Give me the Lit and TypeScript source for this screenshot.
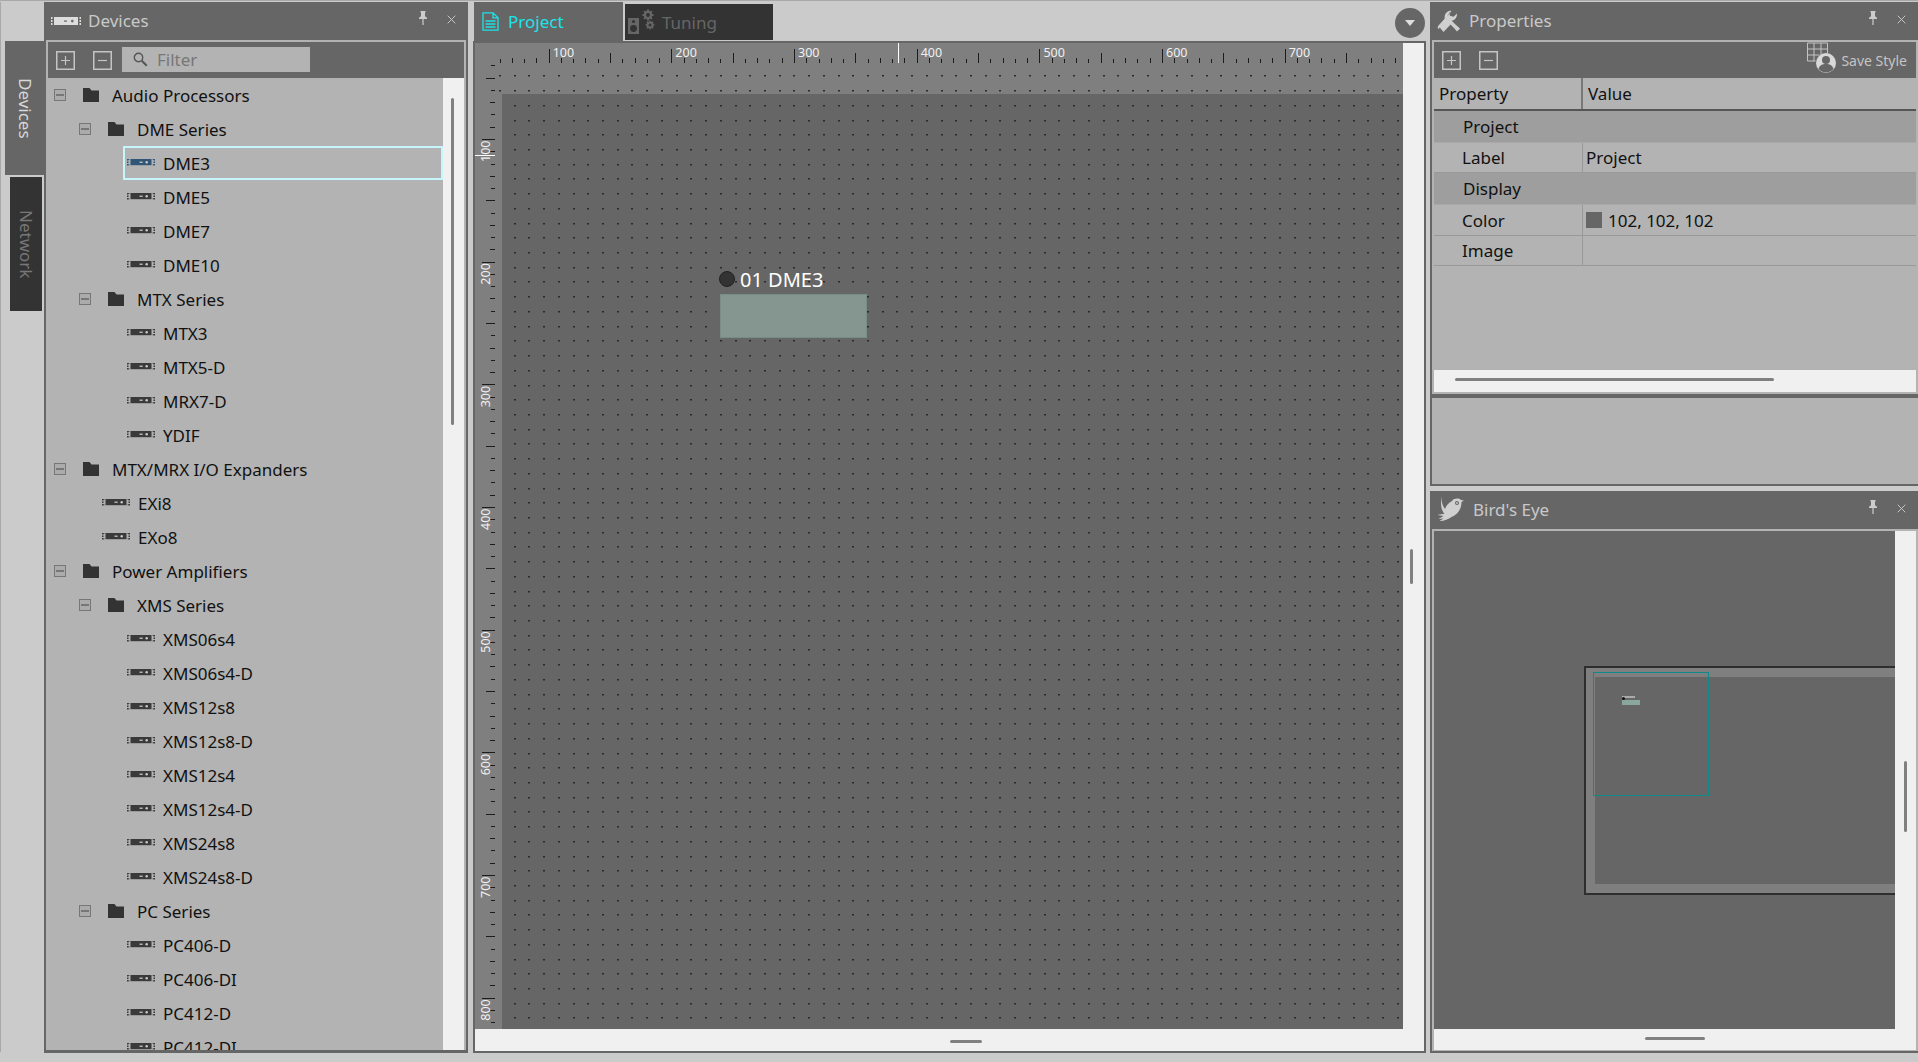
import { LitElement, html, css, svg } from "lit";
import { customElement } from "lit/decorators.js";

type Row = { t: string; k: "f0" | "f1" | "d1" | "d2"; sel?: boolean };
const ROWS: Row[] = [
  { t: "Audio Processors", k: "f0" }, { t: "DME Series", k: "f1" },
  { t: "DME3", k: "d2", sel: true }, { t: "DME5", k: "d2" }, { t: "DME7", k: "d2" }, { t: "DME10", k: "d2" },
  { t: "MTX Series", k: "f1" }, { t: "MTX3", k: "d2" }, { t: "MTX5-D", k: "d2" }, { t: "MRX7-D", k: "d2" }, { t: "YDIF", k: "d2" },
  { t: "MTX/MRX I/O Expanders", k: "f0" }, { t: "EXi8", k: "d1" }, { t: "EXo8", k: "d1" },
  { t: "Power Amplifiers", k: "f0" }, { t: "XMS Series", k: "f1" },
  { t: "XMS06s4", k: "d2" }, { t: "XMS06s4-D", k: "d2" }, { t: "XMS12s8", k: "d2" }, { t: "XMS12s8-D", k: "d2" },
  { t: "XMS12s4", k: "d2" }, { t: "XMS12s4-D", k: "d2" }, { t: "XMS24s8", k: "d2" }, { t: "XMS24s8-D", k: "d2" },
  { t: "PC Series", k: "f1" }, { t: "PC406-D", k: "d2" }, { t: "PC406-DI", k: "d2" }, { t: "PC412-D", k: "d2" }, { t: "PC412-DI", k: "d2" },
];

const deviceIcon = (body: string, mark: string, w = 28) => html`<svg class="dev" width=${w} height="10" viewBox="0 0 28 10">
  <path d="M0 2h1.5v1.5H0zM0 4.5h1.5V6H0zM0 7h1.5v1.5H0zM26.5 2H28v1.5h-1.5zM26.5 4.5H28V6h-1.5zM26.5 7H28v1.5h-1.5zM1.5 2h1v.8h-1zM1.5 7.5h1v.8h-1zM25.5 2h1v.8h-1zM25.5 7.5h1v.8h-1z" fill=${body}/>
  <rect x="3.5" y="2" width="21" height="6.2" fill=${body}/>
  <rect x="12.5" y="4.6" width="3.2" height="1.2" fill=${mark}/><rect x="18.5" y="4" width="2.4" height="2.4" rx="1.2" fill=${mark}/>
</svg>`;

const folder = html`<svg class="fold" width="16" height="14" viewBox="0 0 16 14"><path d="M0 0h6.5l2 2.5H16V14H0z" fill="#333"/></svg>`;
const minusBox = html`<span class="xbox"><i></i></span>`;
const pin = html`<svg class="pin" width="10" height="14" viewBox="0 0 10 14"><path d="M2.5 0h5v1.4H7v3.8l2 1.6V8H5.6v6h-1.2V8H1V6.8l2-1.6V1.4h-.5z" fill="#ccc"/></svg>`;
const closeX = html`<svg class="x" width="9" height="9" viewBox="0 0 9 9"><path d="M.7.7l7.6 7.6M8.3.7L.7 8.3" stroke="#c6c6c6" stroke-width="1"/></svg>`;
const plusBtn = html`<svg class="tb" width="19" height="19" viewBox="0 0 19 19"><rect x=".75" y=".75" width="17.5" height="17.5" fill="none" stroke="#c4c4c4" stroke-width="1.5"/><path d="M5 9.5h9M9.5 5v9" stroke="#c4c4c4" stroke-width="1.2"/></svg>`;
const minusBtn = html`<svg class="tb" width="19" height="19" viewBox="0 0 19 19"><rect x=".75" y=".75" width="17.5" height="17.5" fill="none" stroke="#c4c4c4" stroke-width="1.5"/><path d="M5 9.5h9" stroke="#c4c4c4" stroke-width="1.2"/></svg>`;

function gear(cx: number, cy: number, r: number, color: string, hole: string) {
  const teeth = [];
  for (let i = 0; i < 8; i++) {
    teeth.push(svg`<rect x=${cx - r * 0.22} y=${cy - r * 1.3} width=${r * 0.44} height=${r * 0.6} fill=${color} transform="rotate(${i * 45} ${cx} ${cy})"/>`);
  }
  return svg`${teeth}<circle cx=${cx} cy=${cy} r=${r} fill=${color}/><circle cx=${cx} cy=${cy} r=${r * 0.45} fill=${hole}/>`;
}

function rulerPaths() {
  const S = 122.67 / 10;
  let top = "", left = "";
  for (let i = 0; ; i++) {
    const x = Math.round(24.6 + i * S);
    if (x > 928) break;
    const n = i - 4;
    const h = n % 10 === 0 ? 14 : ((n % 5 + 5) % 5 === 0 ? 10 : (i % 2 ? 5 : 4));
    top += `M${x} ${20 - h}h1v${h}h-1z`;
  }
  for (let i = 0; ; i++) {
    const y = Math.round(22.4 + i * S);
    if (y > 986) break;
    const n = i - 6;
    const w = n % 10 === 0 ? 13 : ((n % 5 + 5) % 5 === 0 ? 9 : (i % 2 ? 5 : 4));
    left += `M${20 - w} ${y}h${w}v1h-${w}z`;
  }
  return top + left;
}

function dotPath() {
  let d = "";
  for (let r = 0; ; r++) {
    const y = Math.round(32.4 + r * 14.72);
    if (y > 978) break;
    const start = y < 51 ? 0 : 1;
    for (let c = start; ; c++) {
      const x = Math.round(24 + c * 14.72);
      if (x > 926) break;
      d += `M${x} ${y}h2v1.5h-2z`;
    }
  }
  return d;
}

@customElement("app-root")
export class AppRoot extends LitElement {
  static styles = css`
    :host { display: block; width: 1918px; height: 1062px; background: #cbcbcb; font-family: "Noto Sans", sans-serif; font-size: 17px; color: #111; overflow: hidden; }
    * { box-sizing: border-box; }
    .root { display: flex; height: 1062px; padding: 2px 0 10px; border-top: 1px solid #a8a8a8; margin-top: 0; position: relative; }
    .root { padding-top: 1px; }
    .rail { width: 44px; flex: none; display: flex; flex-direction: column; padding-top: 39px; border-left: 1px solid #a8a8a8; }
    .vtab { writing-mode: vertical-rl; display: flex; align-items: center; justify-content: center; height: 134px; font-size: 17px; }
    .vtab.on { background: #666; color: #d8d8d8; margin-left: 4px; width: 40px; }
    .vtab.off { background: #333; color: #777; margin: 2px 2px 0 9px; width: 32px; }
    .panel { background: #666; display: flex; flex-direction: column; }
    .title { height: 38px; flex: none; display: flex; align-items: center; color: #c9c9c9; position: relative; }
    .title .ttl { font-size: 17px; line-height: 38px; }
    .title .pin { margin-left: auto; margin-top: -6px; }
    .title .x { margin-left: 19px; margin-right: 12px; margin-top: -4px; }
    .tb { flex: none; }

    .devices { width: 424px; flex: none; height: 1051px; padding: 0 2px 3px; }
    .devices .title { padding-left: 5px; }
    .devices .title .ttl { margin-left: 7px; }
    .devices .title .x { margin-right: 10px; }
    .inner { border: 2px solid #b3b3b3; border-bottom: 0; display: flex; flex-direction: column; min-height: 0; flex: 1; }
    .toolbar { height: 36px; flex: none; display: flex; align-items: center; }
    .devices .toolbar { padding-left: 8px; gap: 18px; }
    .filter { width: 188px; height: 25px; margin-left: -8px; margin-top: -1px; background: #b3b3b3; display: flex; align-items: center; padding-left: 11px; gap: 9px; color: #777; }
    .treewrap { flex: 1; display: flex; min-height: 0; }
    .tree { width: 395px; flex: none; background: #b3b3b3; overflow: hidden; }
    .row { height: 34px; display: flex; align-items: center; position: relative; white-space: nowrap; }
    .row.f0 { padding-left: 6px; }
    .row.f1 { padding-left: 31px; }
    .row.d1 { padding-left: 54px; }
    .row.d2 { padding-left: 79px; }
    .row.sel::before { content: ""; position: absolute; left: 75px; right: 0; top: 0; bottom: 0; border: 2px solid #c4f6fb; }
    .xbox { width: 12px; height: 12px; border: 1.5px solid #777; background: #ababab; display: flex; align-items: center; justify-content: center; flex: none; }
    .xbox i { display: block; width: 8px; height: 1.5px; background: #777; }
    .fold { margin-left: 17px; margin-right: 13px; flex: none; }
    .dev { margin-right: 8px; flex: none; margin-top: -2px; }
    .vscroll { width: 21px; flex: none; background: #f0f0f0; position: relative; }
    .vthumb { position: absolute; background: #808080; border-radius: 2px; }

    .center { width: 953px; flex: none; margin-left: 5px; height: 1051px; display: flex; flex-direction: column; }
    .tabs { height: 41px; flex: none; display: flex; border-bottom: 2px solid #666; align-items: flex-start; position: relative; padding-left: 1px; }
    .tab { height: 39px; display: flex; align-items: center; }
    .tab.on { width: 149px; background: #666; color: #1ce4e8; padding-left: 8px; gap: 9px; }
    .tab.off { width: 148px; height: 36px; margin: 2px 0 0 2px; background: #333; color: #666; padding-left: 3px; gap: 5px; border-bottom: 0; }
    .tabs { background: #cbcbcb; }
    .drop { position: absolute; right: 1px; top: 6px; width: 30px; height: 30px; border-radius: 50%; background: #666; display: flex; align-items: center; justify-content: center; }
    .cbody { flex: 1; min-height: 0; border: 2px solid #666; border-top: 0; display: flex; flex-direction: column; background: #f0f0f0; }
    .cmain { flex: 1; display: flex; min-height: 0; }
    .stage { width: 928px; height: 986px; flex: none; background: #7f7f7f; padding: 51px 0 0 27px; position: relative; overflow: hidden; }
    .sheet { background: #666; width: 100%; height: 100%; }
    .overlay { position: absolute; left: 0; top: 0; }
    .cside { flex: 1; position: relative; }
    .cstrip { height: 20px; flex: none; position: relative; }
    .hthumb { position: absolute; background: #808080; border-radius: 2px; height: 3px; }
    .node { position: absolute; left: 245px; top: 224px; width: 160px; }
    .nlabel { display: flex; align-items: center; color: #fff; font-size: 20px; height: 24px; white-space: nowrap; }
    .ndot { width: 16px; height: 16px; border-radius: 50%; background: #333; border: 1px solid #222; margin-left: -1px; margin-right: 5px; flex: none; }
    .nbox { width: 147px; height: 44px; margin-top: 3px; background: #84968f; border: 1px solid #7a8d85; }

    .right { width: 488px; flex: none; margin-left: 4px; height: 1051px; display: flex; flex-direction: column; }
    .props { height: 484px; flex: none; padding: 0 0 2px 2px; }
    .right .title { padding-left: 5px; }
    .right .title .ttl { margin-left: 8px; }
    .props .pin, .bird .pin { margin-right: 0; }
    .pinner { flex: none; height: 354px; border: 2px solid #b3b3b3; display: flex; flex-direction: column; }
    .props .toolbar { padding-left: 8px; gap: 18px; }
    .save { margin-left: auto; display: flex; align-items: center; color: #c4c4c4; font-size: 14px; margin-right: 9px; }
    .save svg { margin-right: 5px; margin-top: -4px; }
    .ptable { flex: 1; background: #b3b3b3; min-height: 0; }
    .hrow, .prow { display: grid; grid-template-columns: 149px 1fr; }
    .hrow { height: 33px; border-bottom: 2px solid #555; align-items: center; }
    .hrow span { height: 100%; display: flex; align-items: center; padding-left: 5px; }
    .hrow span:first-child { border-right: 2px solid #777; }
    .grp { background: #9e9e9e; height: 32px; display: flex; align-items: center; padding-left: 29px; border-bottom: 1px solid #a8a8a8; }
    .prow { border-bottom: 1px solid #999; height: 30px; align-items: center; }
    .prow.tall { height: 31px; }
    .prow span { height: 100%; display: flex; align-items: center; }
    .prow span:first-child { padding-left: 28px; border-right: 1px solid #999; }
    .prow span:last-child { padding-left: 3px; }
    .swatch { width: 16px; height: 16px; background: #666; margin-right: 6px; flex: none; }
    .pstrip { height: 22px; flex: none; background: #f0f0f0; position: relative; }
    .extra { flex: 1; background: #b3b3b3; margin-top: 4px; }

    .bird { margin-top: 5px; height: 562px; flex: none; padding: 0 0 2px 2px; }
    .binner { flex: 1; border: 2px solid #b3b3b3; border-bottom-width: 1px; display: flex; flex-direction: column; background: #f0f0f0; min-height: 0; }
    .bmain { height: 498px; flex: none; display: flex; }
    .view { width: 461px; flex: none; background: #666; position: relative; overflow: hidden; }
    .bside { flex: 1; position: relative; }
    .bstrip { flex: 1; position: relative; }
    .ov { position: absolute; left: 150px; top: 135px; width: 400px; height: 229px; background: #7f7f7f; border: solid #2e2e2e; border-width: 2px 0 2px 2px; padding: 9px 0 9px 9px; }
    .ovi { background: #666; width: 100%; height: 100%; }
    .teal { position: absolute; left: 159px; top: 141px; width: 116px; height: 124px; border: 1.5px solid #0f8a8a; }
    .mini { position: absolute; left: 188px; top: 169px; width: 18px; height: 5px; background: #8aa79e; }
    .minit { position: absolute; left: 188px; top: 165px; width: 13px; height: 2px; background: #aaa; }
    .minid { position: absolute; left: 188px; top: 166px; width: 3px; height: 3px; border-radius: 50%; background: #111; }
  `;

  render() {
    const S = 122.67;
    return html`<div class="root">
      <div class="rail">
        <div class="vtab on">Devices</div>
        <div class="vtab off">Network</div>
      </div>

      <div class="panel devices">
        <div class="title">
          <svg width="30" height="10" viewBox="0 0 30 10"><path d="M0 1h1.5v2H0zM0 4h1.5v2H0zM0 7h1.5v2H0zM28.5 1H30v2h-1.5zM28.5 4H30v2h-1.5zM28.5 7H30v2h-1.5z" fill="#ddd"/><rect x="3" y="1" width="24" height="8" fill="#ddd"/><rect x="13" y="4.5" width="3" height="1.2" fill="#666"/><rect x="20" y="3.8" width="2.6" height="2.6" rx="1.3" fill="#666"/></svg>
          <span class="ttl">Devices</span>${pin}${closeX}
        </div>
        <div class="inner">
          <div class="toolbar">
            ${plusBtn}${minusBtn}
            <div class="filter">
              <svg width="15" height="15" viewBox="0 0 15 15"><circle cx="5.5" cy="5.5" r="4.2" fill="none" stroke="#555" stroke-width="1.4"/><path d="M8.8 8.8l5 5" stroke="#555" stroke-width="2"/></svg>
              <span>Filter</span>
            </div>
          </div>
          <div class="treewrap">
            <div class="tree">
              ${ROWS.map((r) => html`<div class="row ${r.k} ${r.sel ? "sel" : ""}">
                ${r.k[0] === "f" ? html`${minusBox}${folder}` : deviceIcon(r.sel ? "#2f5577" : "#3a3a3a", "#ccc")}
                <span>${r.t}</span>
              </div>`)}
            </div>
            <div class="vscroll"><div class="vthumb" style="left:8px;width:3px;top:20px;height:327px"></div></div>
          </div>
        </div>
      </div>

      <div class="center">
        <div class="tabs">
          <div class="tab on">
            <svg width="17" height="19" viewBox="0 0 17 19"><path d="M1 .8h10l5 5v12.4H1zM11 .8v5h5M3.5 9h10M3.5 12h10M3.5 15h10" fill="none" stroke="#1ce4e8" stroke-width="1.3"/></svg>
            <span>Project</span>
          </div>
          <div class="tab off">
            <svg width="29" height="26" viewBox="0 0 29 26">
              <rect x="0" y="9" width="11" height="16" fill="#666"/><circle cx="5.5" cy="19.5" r="3.4" fill="#333"/><circle cx="5.5" cy="12.5" r="1.6" fill="#333"/>
              ${gear(20, 6, 4.3, "#666", "#333")}${gear(22, 16, 3.4, "#666", "#333")}
            </svg>
            <span>Tuning</span>
          </div>
          <div class="drop"><svg width="10" height="6" viewBox="0 0 10 6"><path d="M0 0h10L5 6z" fill="#ddd"/></svg></div>
        </div>
        <div class="cbody">
          <div class="cmain">
            <div class="stage">
              <div class="sheet"></div>
              <svg class="overlay" width="928" height="986" viewBox="0 0 928 986">
                <path d=${dotPath()} fill="#2a2a2a"/>
                <path d=${rulerPaths()} fill="#1c1c1c"/>
                ${[1, 2, 3, 4, 5, 6, 7].map((n) => svg`<text x=${73.7 + (n - 1) * S + 4} y="14" font-size="12.5" fill="#f0f0f0" font-family="Noto Sans">${n * 100}</text>`)}
                ${[1, 2, 3, 4, 5, 6, 7, 8].map((n) => svg`<text transform="translate(15 ${119 + (n - 1) * S}) rotate(-90)" font-size="12.5" fill="#f0f0f0" font-family="Noto Sans">${n * 100}</text>`)}
                <rect x="423" y="0" width="1" height="20" fill="#fff"/>
                <rect x="0" y="112" width="20" height="1" fill="#fff"/>
              </svg>
              <div class="node">
                <div class="nlabel"><span class="ndot"></span>01 DME3</div>
                <div class="nbox"></div>
              </div>
            </div>
            <div class="cside"><div class="vthumb" style="left:7px;width:3px;top:506px;height:35px"></div></div>
          </div>
          <div class="cstrip"><div class="hthumb" style="left:475px;width:32px;top:9px"></div></div>
        </div>
      </div>

      <div class="right">
        <div class="panel props">
          <div class="title">
            <svg width="24" height="24" viewBox="0 0 24 24"><path d="M14 1.5a6.5 6.5 0 0 0-6 8.6L1.6 16.4a2.6 2.6 0 0 0 0 3.6l.1.1M8 10.1l8.5 8.5 3.5 4 3-3-4-3.5-4.300-4.400A6.500 6.500 0 0 0 20 4.500l-3.500 3.300-3.500-1 -.8-3.300 3-2.200z" fill="#d0d0d0"/><path d="M9 8L1.500 17l5 6L15 14z" fill="#d0d0d0"/></svg>
            <span class="ttl">Properties</span>${pin}${closeX}
          </div>
          <div class="pinner">
            <div class="toolbar">
              ${plusBtn}${minusBtn}
              <div class="save">
                <svg width="29" height="32" viewBox="0 0 29 32">
                  <path d="M.5 1h20M.5 7h20M.5 13h12M.5 19h8M.5 1v18M7 1v18M14 1v12M20.500 1v10" stroke="#c4c4c4" stroke-width="1" fill="none"/>
                  <circle cx="19" cy="21" r="10" fill="#d8d8d8"/>
                  <circle cx="19" cy="18" r="4" fill="#666"/><path d="M11.500 27c1-4 4-5 7.500-5s6.500 1 7.500 5a10 10 0 0 1-15 0z" fill="#666"/>
                </svg>
                <span>Save Style</span>
              </div>
            </div>
            <div class="ptable">
              <div class="hrow"><span>Property</span><span>Value</span></div>
              <div class="grp">Project</div>
              <div class="prow"><span>Label</span><span>Project</span></div>
              <div class="grp">Display</div>
              <div class="prow tall"><span>Color</span><span><i class="swatch"></i>102, 102, 102</span></div>
              <div class="prow"><span>Image</span><span></span></div>
            </div>
            <div class="pstrip"><div class="hthumb" style="left:21px;width:319px;top:8px"></div></div>
          </div>
          <div class="extra"></div>
        </div>

        <div class="panel bird">
          <div class="title">
            <svg width="28" height="28" viewBox="0 0 28 28"><path d="M5 0c-1 5 0 9 3 13 1-3 3-6 7-8 2-3 7-3 9-1l3 .5-2.500 1.500c0 7-4 13-10 15-3 2-7 4-12 4l4-2.500-5 .5 5-3-6-1c3-1 5-1 7-1C4 14 3 6 5 0z" fill="#d0d0d0"/><circle cx="20" cy="7" r="2" fill="#666"/><circle cx="20" cy="7" r=".9" fill="#d0d0d0"/></svg>
            <span class="ttl">Bird's Eye</span>${pin}${closeX}
          </div>
          <div class="binner">
            <div class="bmain">
              <div class="view">
                <div class="ov"><div class="ovi"></div></div>
                <div class="minit"></div>
                <div class="minid"></div>
                <div class="mini"></div>
                <div class="teal"></div>
              </div>
              <div class="bside"><div class="vthumb" style="left:9px;width:3px;top:230px;height:71px"></div></div>
            </div>
            <div class="bstrip"><div class="hthumb" style="left:211px;width:60px;top:8px"></div></div>
          </div>
        </div>
      </div>
    </div>`;
  }
}
